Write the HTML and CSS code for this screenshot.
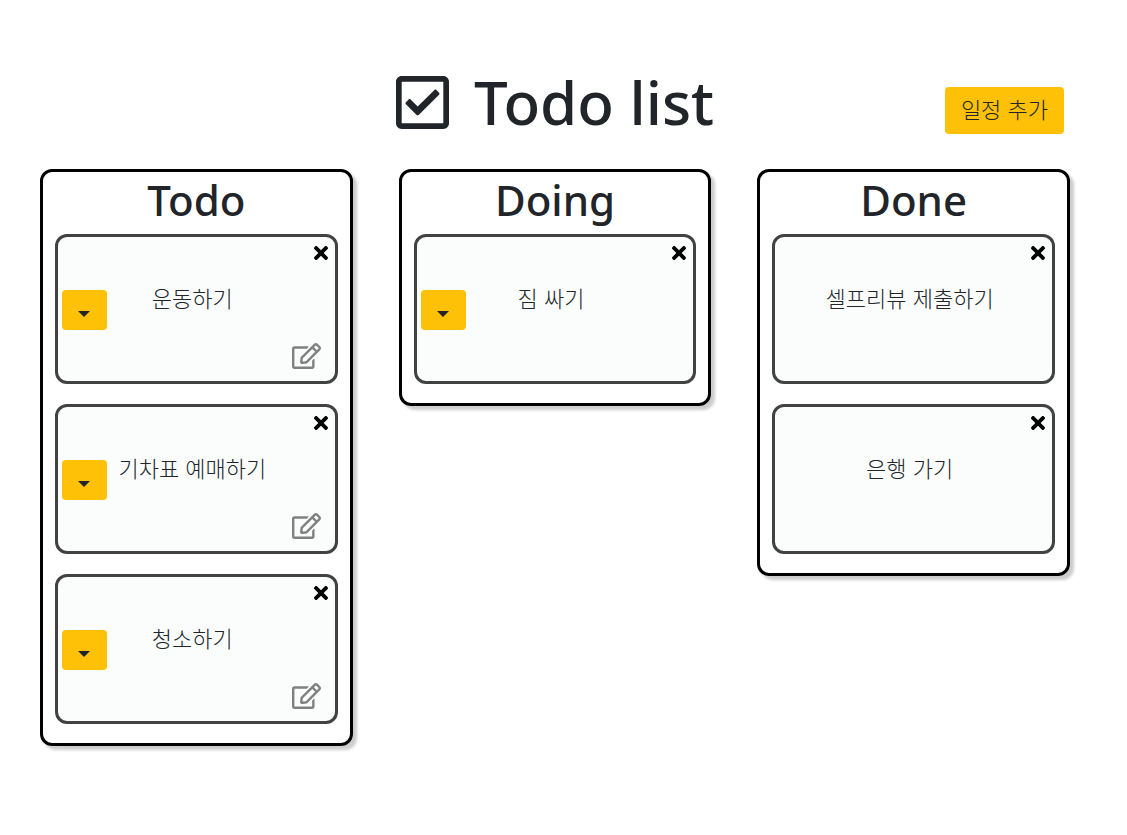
FILE: index.html
```html
<!DOCTYPE html>
<html lang="ko">
<head>
  <meta charset="utf-8">
  <meta name="viewport" content="width=device-width, initial-scale=1">
  <title>Todo list</title>
  <link rel="stylesheet" href="styles.css">
</head>
<body>
  <svg class="sprite" aria-hidden="true">
    <symbol id="icon-close" viewBox="0 80 352 352"><path d="M242.72 256l100.07-100.07c12.28-12.28 12.28-32.19 0-44.48l-22.24-22.24c-12.28-12.28-32.19-12.28-44.48 0L176 189.28 75.93 89.21c-12.28-12.28-32.19-12.28-44.48 0L9.21 111.45c-12.28 12.28-12.28 32.19 0 44.48L109.28 256 9.21 356.07c-12.28 12.28-12.28 32.19 0 44.48l22.24 22.24c12.28 12.28 32.2 12.28 44.48 0L176 322.72l100.07 100.07c12.28 12.28 32.2 12.28 44.48 0l22.24-22.24c12.28-12.28 12.28-32.19 0-44.48L242.72 256z"/></symbol>
    <symbol id="icon-edit" viewBox="0 0 576 512"><path d="M402.3 344.9l32-32c5-5 13.7-1.5 13.7 5.7V464c0 26.5-21.5 48-48 48H48c-26.5 0-48-21.5-48-48V112c0-26.5 21.5-48 48-48h273.5c7.1 0 10.7 8.6 5.7 13.7l-32 32c-1.5 1.5-3.5 2.3-5.7 2.3H48v352h352V350.5c0-2.1.8-4.1 2.3-5.6zm156.6-201.8L296.3 405.7l-90.4 10c-26.2 2.9-48.5-19.2-45.6-45.6l10-90.4L432.9 17.1c22.9-22.9 59.9-22.9 82.7 0l43.2 43.2c22.9 22.9 22.9 60 .1 82.8zM460.1 174L402 115.9 216.2 301.8l-7.3 65.3 65.3-7.3L460.1 174zm64.8-79.7l-43.2-43.2c-4.1-4.1-10.8-4.1-14.8 0L436 82l58.1 58.1 30.9-30.9c4-4.2 4-10.8-.1-14.9z"/></symbol>
  </svg>

  <header class="header">
    <h1 class="title">
      <svg class="title-icon" viewBox="0 32 448 448" aria-hidden="true"><path d="M400 32H48C21.49 32 0 53.49 0 80v352c0 26.51 21.49 48 48 48h352c26.51 0 48-21.49 48-48V80c0-26.51-21.49-48-48-48zm0 400H48V80h352v352zm-35.864-241.724L191.547 361.48c-4.705 4.667-12.303 4.637-16.97-.068l-90.781-91.516c-4.667-4.705-4.637-12.303.069-16.971l22.719-22.536c4.705-4.667 12.303-4.637 16.97.069l59.792 60.277 141.352-140.216c4.705-4.667 12.303-4.637 16.97.068l22.536 22.718c4.667 4.706 4.637 12.304-.068 16.971z"/></svg>
      Todo list
    </h1>
    <button class="add-button" type="button">일정 추가</button>
  </header>

  <main class="board">
    <section class="column">
      <h2 class="column-title">Todo</h2>
      <article class="card">
        <button class="move" type="button" aria-label="이동"><span class="caret"></span></button>
        <p class="card-text">운동하기</p>
        <div class="tools">
          <button class="close" type="button" aria-label="삭제"><svg class="close-icon"><use href="#icon-close"/></svg></button>
          <button class="edit" type="button" aria-label="수정"><svg class="edit-icon"><use href="#icon-edit"/></svg></button>
        </div>
      </article>
      <article class="card">
        <button class="move" type="button" aria-label="이동"><span class="caret"></span></button>
        <p class="card-text">기차표 예매하기</p>
        <div class="tools">
          <button class="close" type="button" aria-label="삭제"><svg class="close-icon"><use href="#icon-close"/></svg></button>
          <button class="edit" type="button" aria-label="수정"><svg class="edit-icon"><use href="#icon-edit"/></svg></button>
        </div>
      </article>
      <article class="card">
        <button class="move" type="button" aria-label="이동"><span class="caret"></span></button>
        <p class="card-text">청소하기</p>
        <div class="tools">
          <button class="close" type="button" aria-label="삭제"><svg class="close-icon"><use href="#icon-close"/></svg></button>
          <button class="edit" type="button" aria-label="수정"><svg class="edit-icon"><use href="#icon-edit"/></svg></button>
        </div>
      </article>
    </section>

    <section class="column">
      <h2 class="column-title">Doing</h2>
      <article class="card">
        <button class="move" type="button" aria-label="이동"><span class="caret"></span></button>
        <p class="card-text">짐 싸기</p>
        <div class="tools">
          <button class="close" type="button" aria-label="삭제"><svg class="close-icon"><use href="#icon-close"/></svg></button>
        </div>
      </article>
    </section>

    <section class="column">
      <h2 class="column-title">Done</h2>
      <article class="card">
        <p class="card-text">셀프리뷰 제출하기</p>
        <div class="tools">
          <button class="close" type="button" aria-label="삭제"><svg class="close-icon"><use href="#icon-close"/></svg></button>
        </div>
      </article>
      <article class="card">
        <p class="card-text">은행 가기</p>
        <div class="tools">
          <button class="close" type="button" aria-label="삭제"><svg class="close-icon"><use href="#icon-close"/></svg></button>
        </div>
      </article>
    </section>
  </main>
</body>
</html>
```
FILE: styles.css
```css
* {
  box-sizing: border-box;
}

body {
  margin: 0;
  padding: 65px 57px 60px 40px;
  background: #fff;
  color: #212529;
  font-family: "Noto Sans", "Noto Sans CJK KR", sans-serif;
}

button {
  padding: 0;
  border: 0;
  background: none;
  color: inherit;
  cursor: pointer;
}

svg {
  display: block;
  fill: currentColor;
}

.sprite {
  display: none;
}

.header {
  display: grid;
  grid-template-columns: 1fr auto 1fr;
  margin-bottom: 30px;
}

.title {
  display: flex;
  grid-column: 2;
  align-items: center;
  gap: 25px;
  margin: 0;
  font-size: 60px;
  font-weight: 500;
  line-height: 74px;
  white-space: nowrap;
}

.title-icon {
  width: 53px;
  height: 53px;
}

.add-button {
  align-self: end;
  justify-self: end;
  height: 47px;
  margin: 0 6px 5px 0;
  padding: 0 16px 5px;
  border-radius: 4px;
  background: #ffc107;
  font-family: "Noto Sans CJK KR", sans-serif;
  font-size: 22px;
  font-weight: 300;
  white-space: nowrap;
}

.board {
  display: grid;
  grid-template-columns: repeat(3, 1fr);
  align-items: start;
  gap: 46px;
}

.column {
  display: flex;
  flex-direction: column;
  gap: 20px;
  padding: 0 12px 19px;
  border: 3px solid #000;
  border-radius: 12px;
  box-shadow: 4px 4px 3px rgba(0, 0, 0, 0.2);
}

.column-title {
  margin: 0 0 -20px;
  padding-bottom: 6px;
  font-size: 42px;
  font-weight: 500;
  line-height: 56px;
  text-align: center;
}

.card {
  display: grid;
  grid-template-columns: 45px 1fr 57px;
  min-height: 150px;
  padding-left: 4px;
  border: 3px solid #424242;
  border-radius: 12px;
  background: #fbfdfd;
}

.move {
  display: flex;
  align-items: center;
  align-self: center;
  justify-content: center;
  height: 40px;
  margin-top: 2px;
  padding: 8px 1px 0 0;
  border-radius: 4px;
  background: #ffc107;
}

.caret {
  border: 6px solid transparent;
  border-top-color: #212529;
  border-bottom: 0;
}

.card-text {
  grid-column: 2;
  align-self: center;
  margin: 0;
  padding-bottom: 24px;
  font-family: "Noto Sans CJK KR", sans-serif;
  font-size: 22px;
  font-weight: 300;
  line-height: 30px;
  text-align: center;
  white-space: nowrap;
}

.tools {
  display: flex;
  flex-direction: column;
  align-items: flex-end;
  justify-content: space-between;
  padding: 9px 7px 12px 0;
}

.close {
  color: #000;
}

.close-icon {
  width: 14px;
  height: 14px;
}

.edit {
  margin-right: 7px;
  color: #808080;
}

.edit-icon {
  width: 29px;
  height: 26px;
}
```
